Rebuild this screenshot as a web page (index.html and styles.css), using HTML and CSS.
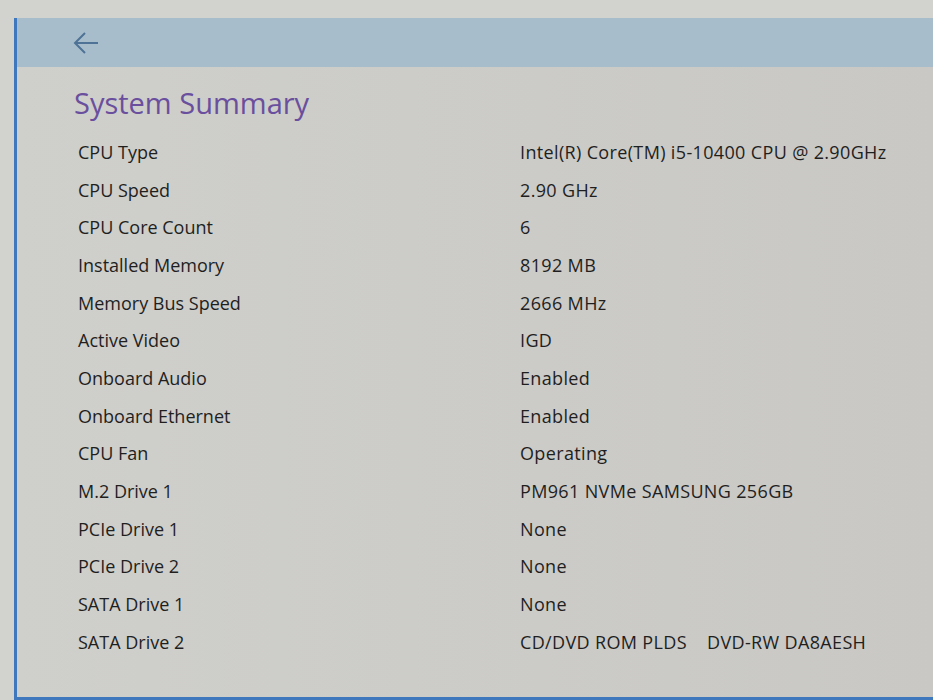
FILE: index.html
```html
<!DOCTYPE html>
<html lang="en">
<head>
  <meta charset="UTF-8">
  <title>System Summary</title>
  <link rel="stylesheet" href="styles.css">
</head>
<body>
  <div class="screen">
    <div class="frame">
      <div class="topbar">
        <svg class="back" width="28" height="24" viewBox="0 0 28 24">
          <path d="M26 12H3M13 2L3 12l10 10" fill="none" stroke="#4f7396" stroke-width="2"/>
        </svg>
      </div>
      <div class="content">
        <h1>System Summary</h1>
        <div class="rows">
          <div class="row"><span class="label">CPU Type</span><span class="value">Intel(R) Core(TM) i5-10400 CPU @ 2.90GHz</span></div>
          <div class="row"><span class="label">CPU Speed</span><span class="value">2.90 GHz</span></div>
          <div class="row"><span class="label">CPU Core Count</span><span class="value">6</span></div>
          <div class="row"><span class="label">Installed Memory</span><span class="value">8192 MB</span></div>
          <div class="row"><span class="label">Memory Bus Speed</span><span class="value">2666 MHz</span></div>
          <div class="row"><span class="label">Active Video</span><span class="value">IGD</span></div>
          <div class="row"><span class="label">Onboard Audio</span><span class="value">Enabled</span></div>
          <div class="row"><span class="label">Onboard Ethernet</span><span class="value">Enabled</span></div>
          <div class="row"><span class="label">CPU Fan</span><span class="value">Operating</span></div>
          <div class="row"><span class="label">M.2 Drive 1</span><span class="value">PM961 NVMe SAMSUNG 256GB</span></div>
          <div class="row"><span class="label">PCIe Drive 1</span><span class="value">None</span></div>
          <div class="row"><span class="label">PCIe Drive 2</span><span class="value">None</span></div>
          <div class="row"><span class="label">SATA Drive 1</span><span class="value">None</span></div>
          <div class="row"><span class="label">SATA Drive 2</span><span class="value">CD/DVD ROM PLDS&nbsp;&nbsp;&nbsp; DVD-RW DA8AESH</span></div>
        </div>
      </div>
    </div>
  </div>
</body>
</html>
```

FILE: styles.css
```css
body {
  margin: 0;
  font-family: "Open Sans", "Noto Sans", sans-serif;
  background: #d2d2ce;
  color: #1f1f1f;
}
.screen {
  height: 700px;
  padding: 18px 0 0 14px;
  box-sizing: border-box;
  overflow: hidden;
}
.frame {
  height: 679px;
  border-left: 3px solid #3f78bd;
  border-bottom: 3px solid #3f78bd;
  background: linear-gradient(90deg, #cfcfcb, #c9c8c4);
}
.topbar {
  height: 49px;
  background: #a8bdcb;
  display: flex;
  align-items: center;
  padding-left: 55px;
}
.back {
  display: block;
}
.content {
  padding: 17px 0 0 57px;
}
h1 {
  margin: 0 0 12px 0;
  font-size: 29px;
  font-weight: 400;
  color: #6a4f9e;
  line-height: 37px;
}
.rows {
  display: flex;
  flex-direction: column;
}
.row {
  display: grid;
  grid-template-columns: 446px 1fr;
  height: 37.7px;
  align-items: center;
  font-size: 18px;
}
.label {
  padding-left: 4px;
}
.value {
  letter-spacing: 0.35px;
}
```
